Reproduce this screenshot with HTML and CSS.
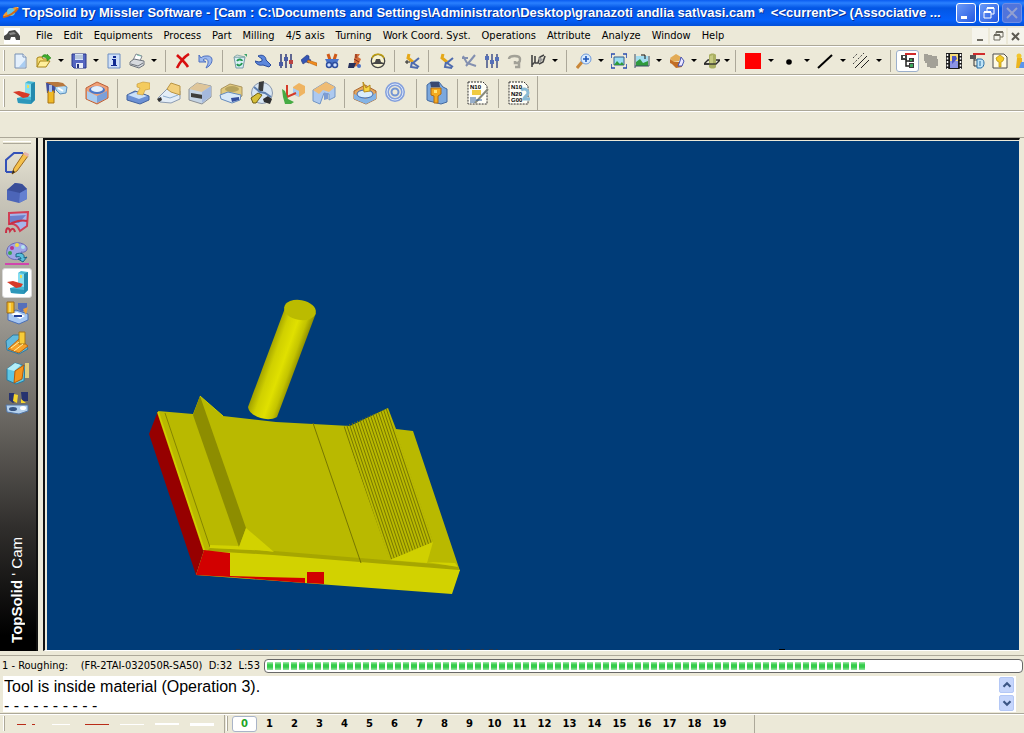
FILE: index.html
```html
<!DOCTYPE html>
<html lang="en">
<head>
    <meta charset="UTF-8">
    <meta name="viewport" content="width=device-width, initial-scale=1.0">
    <title>TopSolid by Missler Software</title>
    <link rel="stylesheet" href="styles.css">
</head>
<body>
    <header class="titlebar">
        <svg class="app-logo" viewBox="0 0 18 16"><path d="M1 12C0 8 12 1 16 2c2 2-6 8-15 10z" fill="#f39a2d"/><path d="M2 11C6 12 15 6 16 2" stroke="#ffe2a8" fill="none"/><circle cx="9" cy="7" r="4" fill="#64c4e8"/><path d="M1 12c5 0 13-5 15-9" stroke="#d46b12" stroke-width="2" fill="none"/></svg>
        <h1 class="title">TopSolid by Missler Software - [Cam : C:\Documents and Settings\Administrator\Desktop\granazoti andlia sat\vasi.cam *&nbsp; &lt;&lt;current&gt;&gt; (Associative ...</h1>
        <div class="window-buttons">
            <button class="win-btn" aria-label="Minimize"><svg viewBox="0 0 20 20"><path d="M5 13h6v3H5z" fill="#fff"/></svg></button>
            <button class="win-btn" aria-label="Restore"><svg viewBox="0 0 20 20"><path d="M8 8V5h7v6h-3M5 9h7v6H5z" fill="none" stroke="#fff" stroke-width="1"/><path d="M5 9h7M8 5h7" stroke="#fff" stroke-width="2"/></svg></button>
            <button class="win-btn disabled" aria-label="Close" disabled><svg viewBox="0 0 20 20"><path d="M5 5l10 10M15 5L5 15" stroke="#93a0d0" stroke-width="2"/></svg></button>
        </div>
    </header>

    <nav class="menubar">
        <svg class="doc-icon" viewBox="0 0 16 16"><path fill="#fff" d="M0 0h16v16H0z"/><path d="M0 11V8l3-2 2-3 6-1 3 3 2 3v4h-4l-1-3H7l-1 3H1z" fill="#484848"/><path d="M5 5l5-1 2 2-6 1z" fill="#8a8a8a"/></svg>
        <a href="#">File</a>
        <a href="#">Edit</a>
        <a href="#">Equipments</a>
        <a href="#">Process</a>
        <a href="#">Part</a>
        <a href="#">Milling</a>
        <a href="#">4/5 axis</a>
        <a href="#">Turning</a>
        <a href="#">Work Coord. Syst.</a>
        <a href="#">Operations</a>
        <a href="#">Attribute</a>
        <a href="#">Analyze</a>
        <a href="#">Window</a>
        <a href="#">Help</a>
        <div class="doc-buttons">
            <button aria-label="Minimize document"><svg viewBox="0 0 16 16"><path d="M5 11h6v2H5z" fill="#6e6c62"/></svg></button>
            <button aria-label="Restore document"><svg viewBox="0 0 16 16"><path d="M6 6V4h7v5h-3M4 7h6v5H4z" fill="none" stroke="#6e6c62"/><path d="M4 7h6M6 4h7" stroke="#6e6c62" stroke-width="2"/></svg></button>
            <button aria-label="Close document"><svg viewBox="0 0 16 16"><path d="M4 5l7 7M11 5l-7 7" stroke="#5c5a52" stroke-width="2"/></svg></button>
        </div>
    </nav>

    <div class="toolbar toolbar-main">
        <span class="grip"></span>
        <button class="tool" aria-label="New"><svg viewBox="0 0 16 16"><path d="M2 1h8l3 3v11H2z" fill="#e4f0fc" stroke="#7790b4"/><path d="M10 1v3h3" fill="#fff" stroke="#7790b4"/><path d="M6 14l6-7v7z" fill="#a9cdf2"/></svg></button>
        <button class="tool" aria-label="Open"><svg viewBox="0 0 16 16"><path d="M1 14V5l2-1h3l1 2h5v3" fill="#f5dc74" stroke="#a88518"/><path d="M1 14l3-6h10l-4 6z" fill="#ffef9c" stroke="#a88518"/><path d="M6 4c1-3 4-3 5-1V1l4 4-4 3V6C10 4 8 4 6 4z" fill="#3fae2c" stroke="#267a18" stroke-width=".5"/></svg></button>
        <button class="drop" aria-label="Open list"></button>
        <button class="tool" aria-label="Save"><svg viewBox="0 0 16 16"><path d="M1 1h14v14H3l-2-2z" fill="#5566c0" stroke="#2a388c"/><path d="M4 1h8v6H4z" fill="#d6e4fb"/><path d="M4 3h8M4 5h8" stroke="#9ab"/><path d="M5 10h7v5H5z" fill="#e9edf9"/><path d="M6 11h2v4H6z" fill="#26347c"/></svg></button>
        <button class="drop" aria-label="Save list"></button>
        <button class="tool" aria-label="Information"><svg viewBox="0 0 16 16"><path d="M2 1h12v14H2z" fill="#cfe0f8" stroke="#6c8ec2"/><path d="M7 3h3v2H7zM6 6h4v6h1v1H5v-1h2V7H6z" fill="#102a92"/></svg></button>
        <button class="tool" aria-label="Print"><svg viewBox="0 0 16 16"><path d="M4 7l3-6 6 2-2 5z" fill="#fff" stroke="#808790"/><path d="M1 9l4-3 10 2v4l-5 3-9-3z" fill="#d7dade" stroke="#6e747c"/><path d="M2 11l7 2 5-3" fill="none" stroke="#6e747c"/><path d="M8 2l4 1" stroke="#7ba"/></svg></button>
        <button class="drop" aria-label="Print list"></button>
        <span class="sep"></span>
        <button class="tool" aria-label="Delete"><svg viewBox="0 0 16 16"><path d="M2 2c3 3 8 7 11 12M14 1C9 4 5 9 2 15" stroke="#d80f0f" stroke-width="2.6" fill="none"/></svg></button>
        <button class="tool" aria-label="Undo"><svg viewBox="0 0 16 16"><path d="M1 2v7h7L5 7c3-3 7 0 4 6l-1 2c7-3 9-13 0-12-3 0-4 1-5 2z" fill="#9db9ee" stroke="#4c6fc0"/></svg></button>
        <span class="sep"></span>
        <button class="tool" aria-label="Recycle"><svg viewBox="0 0 16 16"><path d="M2 4h11l-2 11H4z" fill="#d7eef4" stroke="#7799a8"/><path d="M2 4l3-2 8 2z" fill="#fff" stroke="#8aa"/><path d="M5 8c2-3 5-1 5 0M10 10c-1 3-4 3-5 1" stroke="#259850" stroke-width="2" fill="none"/><path d="M12 1h3v3z" fill="#3aa46a"/></svg></button>
        <button class="tool" aria-label="Settings"><svg viewBox="0 0 16 16"><path d="M3 3c4-2 8 0 8 4l5 5-2 2-6-2c-4 1-7-1-8-4l4 1 3-1V6z" fill="#5c87dc" stroke="#284b9c"/></svg></button>
        <button class="tool" aria-label="Parameters"><svg viewBox="0 0 16 16"><path d="M3 1v14M8 1v14M13 1v14" stroke="#303b78" stroke-width="1.5"/><path d="M1 9h4v4H1zM6 4h4v4H6z" fill="#4a5ca4"/><path d="M11 7h4v4h-4z" fill="#b94444"/></svg></button>
        <button class="tool" aria-label="Hammer"><svg viewBox="0 0 16 16"><path d="M0 7l6-5 2 1v3l2 1-2 3-3-1-3 2z" fill="#3455b4" stroke="#20367c" stroke-width=".6"/><path d="M7 7l9 3v3L6 9z" fill="#f28c1c" stroke="#a85508" stroke-width=".5"/></svg></button>
        <button class="tool" aria-label="Clamp"><svg viewBox="0 0 16 16"><path d="M4 1l2 6M12 1l-2 6" stroke="#d05a18" stroke-width="3"/><path d="M1 6h14l-2 4H3z" fill="#4a74ca"/><circle cx="5" cy="12" r="2.5" fill="#cfe0ff" stroke="#2c4d9e" stroke-width="1.5"/><circle cx="11" cy="12" r="2.5" fill="#cfe0ff" stroke="#2c4d9e" stroke-width="1.5"/></svg></button>
        <button class="tool" aria-label="Trolley"><svg viewBox="0 0 16 16"><path d="M8 1h5l-2 3 3 2-3 7-6 1 2-5z" fill="#d06b38"/><path d="M2 10h7l-2 5H1z" fill="#26305c"/><path d="M9 1v4M7 6l5 3" stroke="#802818"/><circle cx="12" cy="13" r="2" fill="#4a70c4"/></svg></button>
        <button class="tool" aria-label="Simulation"><svg viewBox="0 0 16 16"><circle cx="8" cy="8" r="6.7" fill="#f7f3d0" stroke="#454545" stroke-width="1.3"/><path d="M2 5c2-5 10-5 12 0" fill="none" stroke="#c0a010" stroke-width="1.5"/><path d="M2 10l3-1 1-3h4l1 3 3 1v1H2z" fill="#474747"/></svg></button>
        <span class="sep"></span>
        <button class="tool" aria-label="Origin"><svg viewBox="0 0 16 16"><path d="M5 1L4 5l5 4" stroke="#e5a818" stroke-width="3" fill="none"/><path d="M15 5l-6 5 6 4M8 9l-1 5 7 1" stroke="#4f6cae" stroke-width="2" fill="none"/><path d="M1 9h5M3 7v4" stroke="#222"/></svg></button>
        <span class="sep"></span>
        <button class="tool" aria-label="Frame"><svg viewBox="0 0 16 16"><path d="M5 1L4 5l5 4" stroke="#e5a818" stroke-width="3" fill="none"/><path d="M15 5l-6 5 6 4M8 9l-1 5 7 1" stroke="#4f6cae" stroke-width="2" fill="none"/></svg></button>
        <button class="tool" aria-label="Axes"><svg viewBox="0 0 16 16"><path d="M2 3l4 7 9 3M5 13l9-11M1 5h6" stroke="#8390b0" stroke-width="2" fill="none"/></svg></button>
        <button class="tool" aria-label="Levels"><svg viewBox="0 0 16 16"><path d="M3 1v14M8 1v14M13 1v14" stroke="#405088" stroke-width="1.5"/><path d="M1 3h4v4H1zM6 7h4v4H6zM11 4h4v4h-4z" fill="#5570b8"/></svg></button>
        <button class="tool" aria-label="Hook"><svg viewBox="0 0 16 16"><path d="M2 6c0-4 11-4 11 0s-1 4-5 4V8M12 8v6H8" stroke="#a2a197" stroke-width="2.500" fill="none"/></svg></button>
        <button class="tool" aria-label="Path"><svg viewBox="0 0 16 16"><path d="M2 2v12M2 12l3-3v-6M5 10h3l2-6 4-2M9 11l4-2 2-6" stroke="#444" stroke-width="1.6" fill="none"/><path d="M8 4l5 2-3 4z" fill="#999"/></svg></button>
        <button class="drop" aria-label="Path list"></button>
        <span class="sep"></span>
        <button class="tool" aria-label="Zoom"><svg viewBox="0 0 16 16"><path d="M1 15l5-6" stroke="#c98738" stroke-width="3"/><circle cx="10" cy="6" r="5" fill="#d8ebfd" stroke="#6f9ada"/><path d="M7 6h6M10 3v6" stroke="#1e56b8" stroke-width="1.6"/></svg></button>
        <button class="drop" aria-label="Zoom list"></button>
        <button class="tool" aria-label="Fit"><svg viewBox="0 0 16 16"><path d="M3 4h10v8H3z" fill="#9adcf3" stroke="#365c8c"/><path d="M3 12l3-4 3 3 2-2 2 3z" fill="#2d9a38"/><path d="M0 5V1h4M12 1h4v4M16 11v4h-4M4 15H0v-4" fill="none" stroke="#2a4db0" stroke-width="1.6"/></svg></button>
        <button class="tool" aria-label="View"><svg viewBox="0 0 16 16"><path d="M2 3h12v10H2z" fill="#a3ddf0"/><path d="M2 13V9l4-3 3 4 5-2v5z" fill="#2f9a3e"/><path d="M1 1v14M1 13h14M15 3v10" stroke="#3a4f68"/><path d="M7 2h4v4" stroke="#111" fill="none"/></svg></button>
        <button class="drop" aria-label="View list"></button>
        <button class="tool" aria-label="Render"><svg viewBox="0 0 16 16"><path d="M1 5l6-4 5 3-2 4-6 1z" fill="#e3ab55"/><path d="M1 6l4 3h5l3 2v3l-6 1-4-4-2-1z" fill="#c26e25"/><path d="M12 4l3 4-2 5H9l2-5z" fill="#ece7ff" stroke="#4352b2"/></svg></button>
        <button class="drop" aria-label="Render list"></button>
        <button class="tool" aria-label="Section"><svg viewBox="0 0 16 16"><path d="M0 11l4-4h12l-4 4z" fill="none" stroke="#2b2b2b" stroke-width="1.3"/><path d="M5 2c1-2 6-2 7 0v12c-1 2-6 2-7 0z" fill="#a9af62"/><path d="M6 3v8h3V2z" fill="#c5ca80"/><path d="M0 11h12" stroke="#2b2b2b" stroke-width="1.3"/></svg></button>
        <button class="drop compact" aria-label="Section list"></button>
        <span class="sep"></span>
        <button class="tool wide" aria-label="Colour"><svg viewBox="0 0 16 16"><path d="M0 0h16v16H0z" fill="#f00"/></svg></button>
        <button class="drop" aria-label="Colour list"></button>
        <button class="tool wide" aria-label="Point"><svg viewBox="0 0 16 16"><circle cx="8" cy="9" r="2.8"/></svg></button>
        <button class="drop" aria-label="Point list"></button>
        <button class="tool wide" aria-label="Line"><svg viewBox="0 0 16 16"><path d="M1 15L15 2" stroke="#000" stroke-width="2"/></svg></button>
        <button class="drop" aria-label="Line list"></button>
        <button class="tool wide" aria-label="Hatch"><svg viewBox="0 0 16 16"><path d="M0 5l5-5M0 11L11 0" stroke="#444" stroke-dasharray="2 1.5"/><path d="M2 15L14 3M8 15l8-8" stroke="#222"/></svg></button>
        <button class="drop" aria-label="Hatch list"></button>
        <span class="sep"></span>
        <button class="tool active" aria-label="Tree"><svg viewBox="0 0 16 16"><path d="M5 1h11" stroke="#d12b2b" stroke-width="2"/><path d="M1 2h6v5H1z" fill="#454545"/><path d="M3 3h2v2H3z" fill="#fff"/><path d="M6 6v7h4M6 8h4" stroke="#222" stroke-width="1.500" fill="none"/><path d="M9 5h5v4H9zM9 10h5v5H9z" fill="#3a3a3a"/><path d="M10 6h2v2h-2zM10 11h3v3h-3z" fill="#3ba85c"/></svg></button>
        <button class="tool" aria-label="Component"><svg viewBox="0 0 16 16"><path d="M1 1h4v1h4v1h5v3h1v7h-2v2H7v-1H4v-4H2V8H1z" fill="#a3a197"/></svg></button>
        <button class="tool" aria-label="Film"><svg viewBox="0 0 16 16"><path d="M0 0h16v16H0z" fill="#1c1c1c"/><path d="M4 1h8v14H4z" fill="#f7dc7a"/><path d="M4 8h8v7H4z" fill="#8b94e4"/><path d="M6 3h4l1 3-3 3-2 2z" fill="#4c55c2"/><path d="M1.500 1v15M14.500 1v15" stroke="#fff" stroke-dasharray="2 1.500" stroke-width="1.500"/></svg></button>
        <button class="tool" aria-label="Process tree"><svg viewBox="0 0 16 16"><path d="M4 1h12" stroke="#d12b2b" stroke-width="2"/><path d="M1 2h6v4H1z" fill="#555"/><path d="M5 6v7h4M5 7h5" stroke="#333" fill="none"/><path d="M8 6h4c4 0 4 8 0 9H8z" fill="#bfe4f7" stroke="#266ca4"/><path d="M11 8v5" stroke="#266ca4"/></svg></button>
        <button class="tool" aria-label="Sheet"><svg viewBox="0 0 16 16"><path d="M1 1h11l3 3v11H1z" fill="#fffbe4" stroke="#4c4c4c"/><path d="M8 2l4 3-1 3-2 1v5H7V9L5 8 4 5z" fill="#f5cc24" stroke="#b38908" stroke-width=".7"/></svg></button>
        <button class="tool" aria-label="User"><svg viewBox="0 0 16 16"><circle cx="4" cy="3" r="2.500" fill="#f2c62e"/><path d="M2 5h5v5h7v5H1z" fill="#ecb51f"/><path d="M6 9h10v6H4z" fill="#5b95ec"/></svg></button>
    </div>

    <div class="toolbar toolbar-cam">
        <span class="grip"></span>
        <button class="tool big" aria-label="Machine"><svg viewBox="0 0 24 24"><path d="M12 2l3-2 7 1v18l-4 4-13-1-1-5 8-2z" fill="#48b8d4"/><path d="M12 2l6 1v13l-6-1z" fill="#86def0"/><path d="M4 17l14 2v4l-13-1z" fill="#2d97ba"/><path d="M18 3l4-2v18l-4 4z" fill="#248aae"/><path d="M14 4h2v3h-2z" fill="#e8dc60"/><path d="M0 11l6-1 11 3-2 3-5 1z" fill="#d63a28"/></svg></button>
        <button class="tool big" aria-label="Tool holder"><svg viewBox="0 0 24 24"><path d="M2 2h9v10H3z" fill="#404f9e"/><path d="M4 10h6v12H4z" fill="#efb926" stroke="#a97512"/><path d="M5 4h3v7H5z" fill="#a8c0ee"/><path d="M11 5l6-2 6 3-1 6-6 1-4-4z" fill="#b5dcf5" stroke="#5a8dbb"/><path d="M1 1h13l5 1 3 3-10 1z" fill="#b7773c"/><path d="M14 7l5 3" stroke="#fff" stroke-width="2"/></svg></button>
        <span class="sep"></span>
        <button class="tool big" aria-label="Stock"><svg viewBox="0 0 24 24"><path d="M1 7l11-6 11 5v11l-11 6-11-5z" fill="#efa077" stroke="#bc6038"/><path d="M2 10l10 5v7L2 18z" fill="#a9cdf0"/><path d="M12 15l10-5v7l-10 5z" fill="#7aa0da"/><ellipse cx="12" cy="9" rx="8" ry="4" fill="#4c78c8"/><ellipse cx="12" cy="8" rx="6" ry="3" fill="#e4f0fc"/></svg></button>
        <span class="sep"></span>
        <button class="tool big" aria-label="Roughing"><svg viewBox="0 0 24 24"><path d="M1 14l8-4 14 5v4l-9 4-13-4z" fill="#6b90d4" stroke="#41629e"/><path d="M2 14l8-3 11 4-8 3z" fill="#cbe1f8"/><path d="M11 3l6-2 7 1v6l-5 1-2 5-6-1 3-6-3-1z" fill="#f4cb5d" stroke="#c29534" stroke-width=".6"/></svg></button>
        <button class="tool big" aria-label="Finishing"><svg viewBox="0 0 24 24"><path d="M1 17l9-9 13 2v8l-9 4-11-1z" fill="#e3edf7" stroke="#8b9bb2"/><path d="M10 8l4-6 9 3v9l-9-3z" fill="#f2cf7b" stroke="#b99545"/><path d="M0 18l4-2 1 3-3 2z" fill="#333"/><path d="M6 15l7 2 8-3" stroke="#8badcf" fill="none"/></svg></button>
        <button class="tool big" aria-label="Slot"><svg viewBox="0 0 24 24"><path d="M1 8l8-6 14 3v11l-9 7-13-4z" fill="#c5d4e4" stroke="#8b9096"/><path d="M1 8l8-6 14 3-9 6z" fill="#dfc69a"/><path d="M3 12l12 2v4L3 16z" fill="#3e3e3b"/><path d="M14 11l9-6v10l-9 7z" fill="#a5b9dc"/></svg></button>
        <button class="tool big" aria-label="Pocket"><svg viewBox="0 0 24 24"><path d="M2 8l9-5 12 3v9l-8 6-13-4z" fill="#e1ca80" stroke="#ab955e"/><ellipse cx="13" cy="8" rx="7" ry="3" fill="#b5a25d"/><path d="M1 14l8-3 13 3-1 5-8 3-11-4z" fill="#d8e9f9" stroke="#658bbd"/><path d="M12 17l8-1v3l-7 2z" fill="#344f9e"/></svg></button>
        <button class="tool big" aria-label="Drilling"><svg viewBox="0 0 24 24"><circle cx="12" cy="12" r="10.500" fill="#d8e6f3" stroke="#8a98ae"/><path d="M9 1l5-1-1 10-5 1z" fill="#393c3e"/><path d="M1 17l7-5 4 2-6 8H3z" fill="#d7bf38" stroke="#705f12"/><path d="M13 18l5-3 4 3-2 5-6-2z" fill="#2f3032"/><path d="M4 6l6 5 5 1 6 4" stroke="#5d7fae" stroke-width="2" fill="none"/></svg></button>
        <button class="tool big" aria-label="Axes transform"><svg viewBox="0 0 24 24"><path d="M12 6l6-4 6 3v7l-6 4-6-3z" fill="#efb461"/><path d="M12 7l6 3v6l-6-3z" fill="#a8caf0"/><path d="M6 4v12l9-4" stroke="#d53b29" stroke-width="2" fill="none"/><path d="M1 8l3 2 3 8 6 3-3 2H4L2 16z" fill="#46ab44"/></svg></button>
        <button class="tool big" aria-label="Surface"><svg viewBox="0 0 24 24"><path d="M1 9L14 1l9 5v10l-6 3v-6l-5-1-4 11-7-3z" fill="#adc9ef" stroke="#7195c5"/><path d="M1 9L14 1l9 5-6 5-6-2-4 4z" fill="#efbc75"/><path d="M12 12v7l4-1v-6z" fill="#7c9cd4"/></svg></button>
        <span class="sep"></span>
        <button class="tool big" aria-label="Cavity"><svg viewBox="0 0 24 24"><path d="M1 10l11-6 11 6v8l-10 5-12-5z" fill="#e4a65d" stroke="#aa6731"/><path d="M1 13l12 5 10-6v6l-10 5-12-5z" fill="#84b4e6"/><ellipse cx="12" cy="13" rx="8" ry="4" fill="#d9edfc" stroke="#3c68ae"/><path d="M10 1l3 6 4-3v6l-6 1z" fill="#f7d542" stroke="#b78b1e"/></svg></button>
        <button class="tool big" aria-label="Ring"><svg viewBox="0 0 24 24"><circle cx="11" cy="11" r="8" fill="none" stroke="#84a0dc" stroke-width="4"/><circle cx="11" cy="11" r="3.500" fill="none" stroke="#7295d4" stroke-width="2"/><circle cx="11" cy="11" r="8" fill="none" stroke="#dae7fc"/></svg></button>
        <span class="sep"></span>
        <button class="tool big" aria-label="Tool library"><svg viewBox="0 0 24 24"><path d="M2 4l4-3h8l4 5 4 2v13l-6 2-12-3-2-1z" fill="#7ba8dd" stroke="#4269a0"/><path d="M5 1h9l1 5H6z" fill="#3a4970"/><path d="M6 7h10v6l-3 2v7H9v-7l-3-1z" fill="#f3aa20" stroke="#b36b0f"/><path d="M9 9h3v3H9z" fill="#ffe57a"/></svg></button>
        <span class="sep"></span>
        <button class="tool big" aria-label="Create NC file"><svg viewBox="0 0 24 24"><path d="M2 1h15l4 4v18H2z" fill="#fffef6" stroke="#313131" stroke-dasharray="2 1"/><path d="M6 9h9v5H6z" fill="#f0cb42"/><path d="M9 22L22 8" stroke="#888b7d" stroke-width="2"/><path d="M4 17h6M4 19h12M4 21h5" stroke="#32619e"/><text x="4" y="8" class="nc">N10</text></svg></button>
        <span class="sep"></span>
        <button class="tool big" aria-label="Edit NC file"><svg viewBox="0 0 24 24"><path d="M2 1h15l4 4v18H2z" fill="#fffef6" stroke="#313131" stroke-dasharray="2 1"/><path d="M14 9c5-3 7 1 7 3s-5 5-4 6h6" stroke="#8abbd5" stroke-width="3" fill="none"/><text x="4" y="8" class="nc">N10</text><text x="4" y="15" class="nc">N20</text><text x="4" y="21" class="nc">G00</text></svg></button>
        <span class="sep end"></span>
    </div>

    <div class="toolbar-blank"></div>

    <main class="workspace">
        <aside class="sidebar">
            <span class="side-grip"></span>
            <button class="side-tool" aria-label="Sketch"><svg viewBox="0 0 24 24"><path d="M1 21V9l8-7h9M1 21h8" fill="none" stroke="#3452b8" stroke-width="2"/><path d="M9 17L19 2l4 3-11 15-5 3z" fill="#f4c14c" stroke="#9c6820"/><path d="M18 3l5 3 1-3-4-2z" fill="#e6b4a8"/><path d="M8 19l-1 4 3-2z" fill="#222"/></svg></button>
            <button class="side-tool" aria-label="Shape"><svg viewBox="0 0 24 24"><path d="M2 9l8-7 7 1 5 5v10l-8 4-12-3z" fill="#4c65b8"/><path d="M2 9l8-7 7 1 5 5-7 4z" fill="#3a4e98"/><path d="M15 12l7-4v10l-8 4z" fill="#6580d0"/></svg></button>
            <button class="side-tool" aria-label="Surface"><svg viewBox="0 0 24 24"><path d="M4 2l19-1-1 14-7 5c-2-5-6-8-11-7z" fill="#a6b5ea" stroke="#d13f55" stroke-width="2"/><path d="M5 5l16-1-7 8-9-1z" fill="#6c80cc"/><path d="M4 13c5-1 9-5 18-3M1 22c0-6 3-6 4-2 2-3 4-3 5 1" fill="none" stroke="#c82f45" stroke-width="2"/></svg></button>
            <button class="side-tool" aria-label="Palette"><svg viewBox="0 0 24 24"><path d="M2 9c1-7 13-10 19-4 3 4-1 7-5 6 4 6-3 9-9 7-5-2-6-5-5-9z" fill="#9fa5e7" stroke="#6a68b5"/><circle cx="7" cy="7" r="2" fill="#b7368d"/><circle cx="12" cy="4" r="2" fill="#f1da46"/><circle cx="18" cy="6" r="2" fill="#b4e4ee"/><circle cx="5" cy="12" r="2" fill="#38a352"/><path d="M11 13c5-2 9 0 8 4l3-1-4 5-5-3h3c0-2-2-3-5-2z" fill="#58bfdc" stroke="#1d6384"/><path d="M0 23h24" stroke="#d145ae" stroke-width="2"/></svg></button>
            <button class="side-tool active" aria-label="Cam"><svg viewBox="0 0 24 24"><path d="M13 2l3-2 7 1v18l-4 4-13-1-1-5 8-2z" fill="#48b8d4"/><path d="M13 2l6 1v13l-6-1z" fill="#86def0"/><path d="M5 17l14 2v4l-13-1z" fill="#2d97ba"/><path d="M19 3l4-2v18l-4 4z" fill="#248aae"/><path d="M15 4h2v3h-2z" fill="#e8dc60"/><path d="M2 11l6-1 10 3-2 3-5 1z" fill="#d63a28"/></svg></button>
            <button class="side-tool" aria-label="Mold"><svg viewBox="0 0 24 24"><path d="M3 12l8-3 12 4v6l-9 4-11-4z" fill="#a6c7f2" stroke="#4a6fb7"/><path d="M2 1h7v11H2z" fill="#f4bd26" stroke="#9c6b1b"/><path d="M5 2v9" stroke="#fff2a3"/><path d="M13 2h9v5l-5 4-4-3z" fill="#566fba"/><path d="M6 13l6-2 8 4-5 3z" fill="#fff"/><path d="M9 15h8" stroke="#223e97" stroke-width="2"/><path d="M18 8l5-2-2 8z" fill="#ec9f3a"/></svg></button>
            <button class="side-tool" aria-label="Progress"><svg viewBox="0 0 24 24"><path d="M1 10l7-6h7l8 14-9 5-12-4z" fill="#62bade" stroke="#317ba0"/><path d="M3 18l11-10 9 7-9 7z" fill="#f6a129" stroke="#b66416"/><path d="M14 1h6v12h-6z" fill="#f8cc38" stroke="#a57419"/><path d="M6 17l8-6M9 20l9-7" stroke="#fff2a3"/></svg></button>
            <button class="side-tool" aria-label="Sheet metal"><svg viewBox="0 0 24 24"><path d="M2 8l8-6 10 3-1 15-8 3-9-4z" fill="#5fc7e4" stroke="#287ba1"/><path d="M10 10l9-6-2 14-8 4z" fill="#f5961d" stroke="#b45a0c"/><path d="M21 2v15M23 2v15" stroke="#ffe984" stroke-width="1.500"/><path d="M2 8l8-6 6 2-7 6z" fill="#b3edf7"/></svg></button>
            <button class="side-tool" aria-label="Wire"><svg viewBox="0 0 24 24"><path d="M1 14h22v6l-9 3-12-2z" fill="#b4d1ed" stroke="#5275a5"/><path d="M4 2h5l3 7-4 3-4-3zM16 1h7v9h-6z" fill="#26326f"/><path d="M9 3l4 1-1 8-4-2zM16 8l5 4h-5z" fill="#f5d42c"/><ellipse cx="8" cy="18" rx="4" ry="2" fill="#385582"/><ellipse cx="18" cy="17" rx="3" ry="2" fill="#fff"/></svg></button>
            <div class="side-label"><strong>TopSolid</strong> ' Cam</div>
        </aside>

        <section class="viewport">
            <svg class="scene" viewBox="47 141 972 509" preserveAspectRatio="xMinYMin meet">
                <defs>
                    <linearGradient id="cylinder" gradientUnits="userSpaceOnUse" x1="264" y1="362" x2="295" y2="373">
                        <stop offset="0" stop-color="#a0a000"/>
                        <stop offset=".25" stop-color="#d0d000"/>
                        <stop offset=".55" stop-color="#e0e000"/>
                        <stop offset=".8" stop-color="#c4c400"/>
                        <stop offset="1" stop-color="#8c8c00"/>
                    </linearGradient>
                    <pattern id="ridges" patternUnits="userSpaceOnUse" width="3" height="8" patternTransform="skewX(18.500)">
                        <path d="M0 0h1v8H0z" fill="#777700"/>
                    </pattern>
                </defs>

                <!-- block -->
                <path d="M158 411L149 434 196 575 204 550z" fill="#960000"/>
                <path d="M158 411l35 3 7-18 23 20 53 6 74 4 38-18 8 21 17 2 47 140-256-21z" fill="#b9b900"/>
                <path d="M204 550l69 2 184 17 3 1-8 24-256-19z" fill="#d2d200"/>
                <path d="M210 548l64 3 184 15 1 4-186-15-66-4z" fill="#a6a600"/>
                <path d="M158 412l46 138" stroke="#d0d000" stroke-width="2"/>
                <path d="M165 413l45 134" stroke="#858500"/>
                <path d="M210 545l30 1 33 5-63-3z" fill="#d2d200"/>
                <path d="M427 562l28 1 3 4" fill="#d2d200"/>

                <!-- left rib -->
                <path d="M200 396l46 132-7 19-46-132z" fill="#8d8d00"/>
                <path d="M200 396l23 20" stroke="#cccc00" fill="none"/>
                <path d="M246 528l28 24-35-5z" fill="#d2d200"/>

                <!-- machined side -->
                <path d="M313 423l48 140" stroke="#777700"/>
                <path d="M343 427l45-19 45 134-43 18z" fill="url(#ridges)"/>
                <path d="M433 542l-43 18 37 3z" fill="#d0d000"/>

                <!-- uncut stock -->
                <path d="M204 550l26 3v24l-34-2z" fill="#d20000"/>
                <path d="M230 576l75 2v5l-75-6zM307 572h17v12l-17-1z" fill="#d20000"/>

                <!-- cutter -->
                <path d="M285 308l-37 99c1 9 19 16 29 10l39-104z" fill="url(#cylinder)"/>
                <ellipse cx="300" cy="310" rx="16" ry="10" fill="#bbbb00" transform="rotate(10 300 310)"/>

                <path d="M236 649.500h264" stroke="#26364c" stroke-dasharray="4 3 2 6 3 5"/>
                <path d="M779 649h6v1h-6z"/>
            </svg>
        </section>
    </main>

    <div class="status">
        <label class="status-text" for="progress">1 - Roughing: &nbsp;&nbsp; (FR-2TAI-032050R-SA50)&nbsp; D:32&nbsp; L:53</label>
        <progress class="progress" id="progress" value="79.5" max="100"></progress>
    </div>

    <div class="messages">
        <textarea class="message-text" rows="2" readonly aria-label="Messages">Tool is inside material (Operation 3).
- - - - - - - - - -</textarea>
        <div class="scroll-buttons">
            <button aria-label="Scroll up"><svg viewBox="0 0 16 16"><path d="M4 10l4-4 4 4" fill="none" stroke="#3c5686" stroke-width="2.500"/></svg></button>
            <button aria-label="Scroll down"><svg viewBox="0 0 16 16"><path d="M4 6l4 4 4-4" fill="none" stroke="#3c5686" stroke-width="2.500"/></svg></button>
        </div>
    </div>

    <footer class="bottom-bar">
        <span class="grip"></span>
        <button class="line-style" aria-label="Axis line"><svg viewBox="0 0 24 8"><path d="M2 4.500h9m6 0h3" stroke="#b92c18" stroke-width="1"/></svg></button>
        <button class="line-style" aria-label="Thin line"><svg viewBox="0 0 24 8"><path d="M2 4.500h18" stroke="#fff" stroke-width="1"/></svg></button>
        <button class="line-style" aria-label="Red line"><svg viewBox="0 0 24 8"><path d="M0 4.500h24" stroke="#b92c18" stroke-width="1"/></svg></button>
        <button class="line-style" aria-label="Normal line"><svg viewBox="0 0 24 8"><path d="M0 4.500h24" stroke="#fff" stroke-width="1"/></svg></button>
        <button class="line-style" aria-label="Medium line"><svg viewBox="0 0 24 8"><path d="M0 4h24" stroke="#fff" stroke-width="2"/></svg></button>
        <button class="line-style" aria-label="Thick line"><svg viewBox="0 0 24 8"><path d="M0 4.500h24" stroke="#fff" stroke-width="3"/></svg></button>
        <span class="sep"></span>
        <span class="grip"></span>
        <button class="layer active">0</button>
        <button class="layer">1</button>
        <button class="layer">2</button>
        <button class="layer">3</button>
        <button class="layer">4</button>
        <button class="layer">5</button>
        <button class="layer">6</button>
        <button class="layer">7</button>
        <button class="layer">8</button>
        <button class="layer">9</button>
        <button class="layer">10</button>
        <button class="layer">11</button>
        <button class="layer">12</button>
        <button class="layer">13</button>
        <button class="layer">14</button>
        <button class="layer">15</button>
        <button class="layer">16</button>
        <button class="layer">17</button>
        <button class="layer">18</button>
        <button class="layer">19</button>
        <span class="sep last"></span>
    </footer>
</body>
</html>
```
FILE: styles.css
```css
* {
    margin: 0;
    padding: 0;
    box-sizing: border-box;
}

body {
    font-family: "DejaVu Sans Condensed", "Noto Sans", sans-serif;
    font-size: 11px;
    color: #000;
    background: #ece9d8;
    height: 100vh;
    display: flex;
    flex-direction: column;
    overflow: hidden;
}

button {
    border: none;
    background: none;
    flex: none;
    display: flex;
    align-items: center;
    justify-content: center;
    font: inherit;
}

svg {
    display: block;
}

/* title bar */
.titlebar {
    display: flex;
    align-items: center;
    flex: none;
    height: 26px;
    padding: 0 2px;
    background: linear-gradient(#0a5cf0 0, #2a80ff 3px, #0356e4 8px, #0460fb 20px, #0450d8 26px);
}

.app-logo {
    width: 18px;
    height: 16px;
    flex: none;
}

.title {
    flex: 1;
    min-width: 0;
    padding-left: 2px;
    overflow: hidden;
    white-space: nowrap;
    font-family: "Liberation Sans", Arial, sans-serif;
    font-size: 13px;
    font-weight: bold;
    line-height: 20px;
    color: #fff;
    text-shadow: 1px 1px 0 #0b2f90;
}

.window-buttons {
    display: flex;
    gap: 3px;
}

.win-btn {
    width: 20px;
    height: 20px;
    border: 1px solid #fff;
    border-radius: 3px;
    background: linear-gradient(135deg, #6c9bf8, #2458e0);
}

.win-btn svg {
    width: 20px;
    height: 20px;
    flex: none;
}

.win-btn.disabled {
    border-color: #6f8de4;
    background: #5074dc;
}

/* menu */
.menubar {
    display: flex;
    align-items: center;
    flex: none;
    gap: 11px;
    height: 20px;
    padding-left: 4px;
}

.menubar a {
    color: #000;
    text-decoration: none;
    line-height: 16px;
    white-space: nowrap;
}

.doc-icon {
    width: 16px;
    height: 16px;
    margin-right: 5px;
}

.doc-buttons {
    display: flex;
    gap: 2px;
    margin-left: auto;
}

.doc-buttons button {
    width: 16px;
    height: 16px;
    background: #f5f4ec;
}

.doc-buttons svg {
    width: 16px;
    height: 16px;
}

/* toolbars */
.toolbar {
    display: flex;
    align-items: center;
    flex: none;
    overflow: hidden;
    padding-left: 3px;
    border-top: 1px solid #fff;
    border-bottom: 1px solid #aca899;
}

.toolbar-main {
    height: 29px;
    box-shadow: 0 -1px #aca899;
}

.toolbar-cam {
    height: 36px;
}

.toolbar-blank {
    flex: none;
    height: 26px;
    border-top: 1px solid #fff;
}

.grip {
    flex: none;
    width: 2px;
    height: 80%;
    margin-right: 4px;
    border-right: 1px solid #aca899;
    background: #fff;
}

.tool {
    width: 23px;
    height: 22px;
}

.tool svg {
    width: 16px;
    height: 16px;
    flex: none;
}

.tool.wide {
    width: 24px;
}

.tool.active {
    border: 1px solid #9cb0cc;
    border-radius: 3px;
    background: #fff;
}

.tool.big {
    width: 31px;
    height: 28px;
}

.tool.big svg {
    width: 24px;
    height: 24px;
}

.nc {
    font-family: "Liberation Sans", sans-serif;
    font-size: 6px;
    font-weight: bold;
}

.drop {
    width: 12px;
    height: 22px;
}

.drop::before {
    content: "";
    border: 3px solid transparent;
    border-top-color: #000;
    border-bottom: none;
}

.drop.compact {
    width: 7px;
}

.sep {
    flex: none;
    width: 11px;
    height: 22px;
    background: linear-gradient(#aca899, #aca899) 5px 0 / 1px 100% no-repeat;
}

.toolbar-cam .sep {
    width: 10px;
    height: 29px;
}

.toolbar-cam .sep.end {
    height: 34px;
    width: 6px;
    background-position-x: 3px;
}

/* workspace */
.workspace {
    flex: 1;
    min-height: 0;
    display: flex;
    border-top: 1px solid #aca899;
}

.sidebar {
    flex: none;
    display: flex;
    flex-direction: column;
    align-items: center;
    width: 38px;
    margin: 0 5px 4px 0;
    padding: 3px 2px 0 0;
    border-right: 2px solid #111;
    background: linear-gradient(#ece9d8 0, #c8c5b9 12%, #99968f 36%, #66635e 56%, #302e2c 76%, #000 97%);
}

.side-grip {
    width: 28px;
    height: 3px;
    margin-bottom: 4px;
    border-top: 1px solid #fff;
    border-bottom: 1px solid #aca899;
}

.side-tool {
    width: 30px;
    height: 30px;
}

.side-tool.active {
    border: 1px solid #d8d8d8;
    border-radius: 3px;
    background: #fff;
}

.side-tool svg {
    width: 24px;
    height: 24px;
}

.side-label {
    margin-top: auto;
    padding-top: 8px;
    writing-mode: vertical-rl;
    transform: rotate(180deg);
    font-family: "Liberation Sans", Arial, sans-serif;
    font-size: 15px;
    line-height: 20px;
    white-space: nowrap;
    color: #fff;
}

.viewport {
    flex: 1;
    min-width: 0;
    margin: 0 4px 4px 0;
    border: 2px solid #111;
    border-right: 1px solid #ece9d8;
    border-bottom: 1px solid #fff;
    padding: 1px 0 0 2px;
    background: #003c78 content-box;
}

.scene {
    width: 100%;
    height: 100%;
}

/* status line */
.status {
    display: flex;
    align-items: center;
    flex: none;
    height: 20px;
    padding: 0 1px 0 2px;
    border-top: 1px solid #aca899;
}

.status-text {
    flex: none;
    width: 262px;
    line-height: 16px;
    white-space: nowrap;
}

.progress {
    flex: 1;
    min-width: 0;
    height: 14px;
    padding: 2px;
    border: 1px solid #686868;
    border-radius: 4px;
    background: #fff;
    appearance: none;
}

.progress::-webkit-progress-bar {
    background: #fff;
}

.progress::-webkit-progress-value {
    background:
        repeating-linear-gradient(90deg, transparent 0, transparent 6px, #fff 6px, #fff 8px),
        linear-gradient(#a8eab0, #35cc4c 35%, #35cc4c 65%, #98e6a2);
}

/* messages */
.messages {
    display: flex;
    flex: none;
    height: 36px;
    margin: 1px 8px 1px 3px;
    background: #fff;
}

.message-text {
    flex: 1;
    min-width: 0;
    padding: 1px 0 0 1px;
    border: none;
    resize: none;
    overflow: hidden;
    background: #fff;
    font-family: "Liberation Sans", Arial, sans-serif;
    font-size: 16px;
    line-height: 19px;
    color: #000;
}

.scroll-buttons {
    display: flex;
    flex-direction: column;
    justify-content: space-between;
    width: 18px;
    padding: 1px;
}

.scroll-buttons button {
    width: 15px;
    height: 16px;
    border: 1px solid #b4c8f6;
    border-radius: 2px;
    background: #c6d6fc;
}

.scroll-buttons svg {
    width: 14px;
    height: 14px;
    flex: none;
}

/* bottom bar */
.bottom-bar {
    display: flex;
    align-items: center;
    flex: none;
    height: 20px;
    padding-left: 3px;
    border-top: 1px solid #aca899;
    box-shadow: inset 0 1px #fff;
}

.line-style {
    width: 35px;
    height: 18px;
}

.line-style svg {
    width: 24px;
    height: 8px;
}

.bottom-bar .sep {
    width: 7px;
    height: 18px;
}

.layer {
    width: 25px;
    height: 16px;
    font-family: "DejaVu Sans", sans-serif;
    font-size: 10px;
    font-weight: bold;
}

.layer.active {
    border: 1px solid #a9b4c8;
    border-radius: 3px;
    background: #fff;
    color: #1fa52a;
}

.bottom-bar .sep.last {
    width: 23px;
    background-position-x: 22px;
}
```
